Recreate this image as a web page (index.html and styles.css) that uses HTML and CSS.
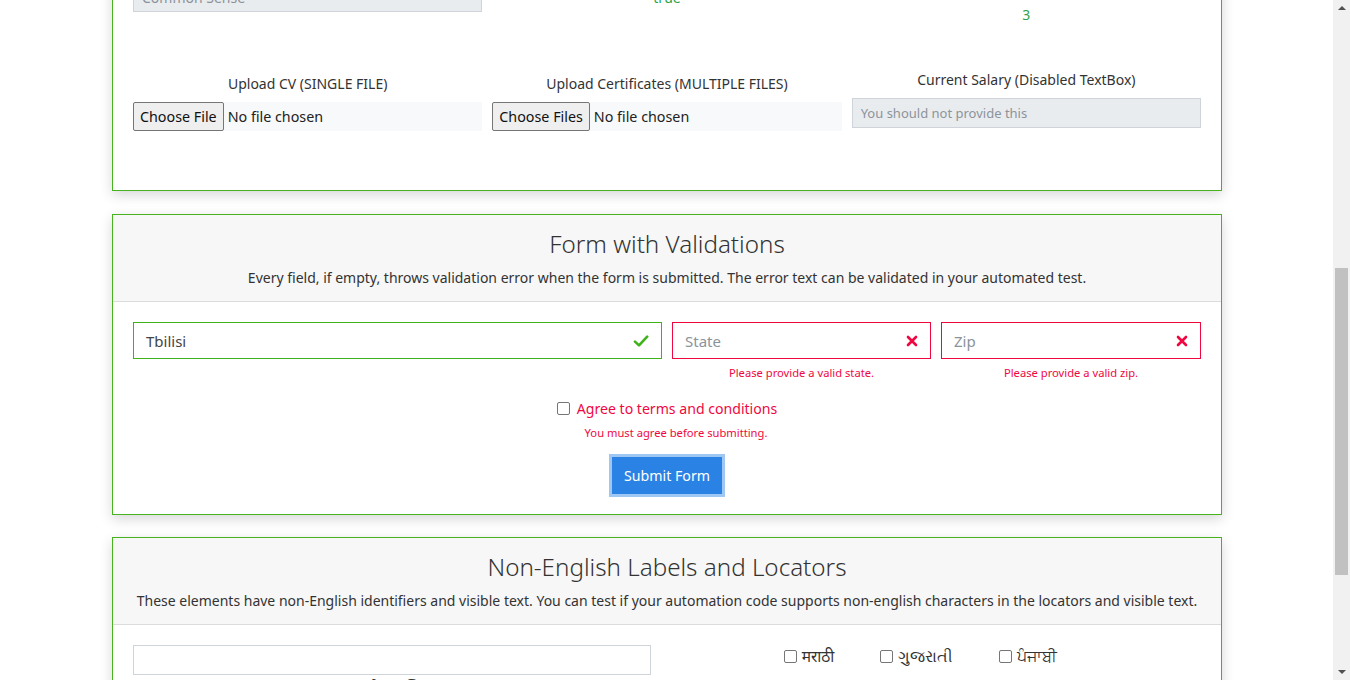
FILE: index.html
```html
<!DOCTYPE html>
<html lang="en">
<head>
<meta charset="utf-8">
<title>Forms</title>
<link rel="stylesheet" href="styles.css">
</head>
<body>
<div class="viewport">
  <main class="page">
    <div class="container">
      <section class="card card-top">
        <div class="card-body">
          <div class="grid3 row-top">
            <div class="col"><input class="form-control disabled" value="Common Sense" disabled></div>
            <div class="col value v-true">true</div>
            <div class="col value v-three">3</div>
          </div>
          <div class="grid3 row-upload">
            <div class="col col-file">
              <div class="lbl">Upload CV (SINGLE FILE)</div>
              <div class="file"><span class="file-btn">Choose File</span><span class="file-txt">No file chosen</span></div>
            </div>
            <div class="col col-file">
              <div class="lbl">Upload Certificates (MULTIPLE FILES)</div>
              <div class="file"><span class="file-btn">Choose Files</span><span class="file-txt">No file chosen</span></div>
            </div>
            <div class="col">
              <div class="lbl">Current Salary (Disabled TextBox)</div>
              <input class="form-control disabled small" placeholder="You should not provide this" disabled>
            </div>
          </div>
        </div>
      </section>

      <section class="card">
        <header class="card-header">
          <h2 class="card-title">Form with Validations</h2>
          <p class="card-sub">Every field, if empty, throws validation error when the form is submitted. The error text can be validated in your automated test.</p>
        </header>
        <div class="card-body">
          <div class="vrow">
            <div class="vcol">
              <div class="vinput valid">
                <span class="vtext">Tbilisi</span>
                <svg class="vicon" viewBox="0 0 16 16" width="16" height="16"><path d="M2 8.6 L6 12.4 L14.2 3.6" fill="none" stroke="#3fb31c" stroke-width="2.6" stroke-linecap="round" stroke-linejoin="round"/></svg>
              </div>
            </div>
            <div class="vcol">
              <div class="vinput invalid">
                <span class="vtext ph">State</span>
                <svg class="vicon" viewBox="0 0 12 12" width="12" height="12"><path d="M2 2 L10 10 M10 2 L2 10" fill="none" stroke="#f0073f" stroke-width="2.6" stroke-linecap="round"/></svg>
              </div>
              <div class="err">Please provide a valid state.</div>
            </div>
            <div class="vcol">
              <div class="vinput invalid">
                <span class="vtext ph">Zip</span>
                <svg class="vicon" viewBox="0 0 12 12" width="12" height="12"><path d="M2 2 L10 10 M10 2 L2 10" fill="none" stroke="#f0073f" stroke-width="2.6" stroke-linecap="round"/></svg>
              </div>
              <div class="err">Please provide a valid zip.</div>
            </div>
          </div>
          <div class="agree">
            <span class="cbox"></span>
            <span class="agree-txt">Agree to terms and conditions</span>
          </div>
          <div class="err err-agree">You must agree before submitting.</div>
          <div class="submit-wrap"><button class="btn" type="button">Submit Form</button></div>
        </div>
      </section>

      <section class="card">
        <header class="card-header">
          <h2 class="card-title">Non-English Labels and Locators</h2>
          <p class="card-sub">These elements have non-English identifiers and visible text. You can test if your automation code supports non-english characters in the locators and visible text.</p>
        </header>
        <div class="card-body ne-body">
          <div class="ne-col">
            <input class="form-control ne-input">
            <div class="ne-label">तुमचे नाव लिहा</div>
          </div>
          <div class="ne-checks">
            <span class="ne-check"><span class="cbox"></span>मराठी</span>
            <span class="ne-check"><span class="cbox"></span>ગુજરાતી</span>
            <span class="ne-check"><span class="cbox"></span>ਪੰਜਾਬੀ</span>
          </div>
        </div>
      </section>
    </div>
  </main>
  <div class="scrollbar">
    <span class="arrow up"></span>
    <div class="track"><div class="thumb"></div></div>
    <span class="arrow down"></span>
  </div>
</div>
</body>
</html>
```

FILE: styles.css
```css
* { box-sizing: border-box; }
html, body { margin: 0; padding: 0; }
body {
  font-family: "Noto Sans", "Open Sans", sans-serif;
  color: #333;
  background: #fff;
}
.viewport {
  display: flex;
  width: 1350px;
  height: 680px;
  overflow: hidden;
}
.page {
  flex: 0 0 1333px;
  height: 680px;
  overflow: hidden;
}
.container {
  width: 1110px;
  margin-left: 112px;
}
.card {
  border: 1px solid #46b31f;
  background: #fff;
  box-shadow: 0 4px 12px rgba(0, 0, 0, 0.16);
  margin-bottom: 22px;
}
.card-top {
  margin-top: -39px;
  margin-bottom: 23px;
}
.card-body {
  padding: 20px;
}
.grid3 {
  display: grid;
  grid-template-columns: 1fr 1fr 1fr;
  column-gap: 10px;
  align-items: start;
}
.form-control {
  display: block;
  width: 100%;
  height: 30px;
  border: 1px solid #ced4da;
  background: #fff;
  font-family: inherit;
  font-size: 14px;
  color: #495057;
  padding: 0 8px;
  outline: none;
}
.form-control.disabled {
  background: #e9ecef;
  color: #8c939a;
}
.form-control.small { font-size: 13px; }
.form-control::placeholder { color: #8c939a; }
.value {
  text-align: center;
  color: #2ea44f;
  font-size: 14px;
  line-height: 20px;
}
.v-true { margin-top: 6px; }
.v-three { margin-top: 23px; }
.row-upload {
  margin-top: 44px;
  margin-bottom: 39px;
}
.lbl {
  text-align: center;
  font-size: 14px;
  line-height: 22px;
  margin-bottom: 7px;
  color: #333;
}
.col-file { padding-top: 4px; }
.file {
  display: flex;
  align-items: stretch;
  height: 29px;
  background: #f8f9fa;
  font-size: 14.3px;
  color: #222;
}
.file-btn {
  display: flex;
  align-items: center;
  padding: 0 6px;
  border: 1px solid #767676;
  border-radius: 2px;
  background: #efefef;
  color: #111;
}
.file-txt {
  display: flex;
  align-items: center;
  padding-left: 4px;
}
.card-header {
  background: #f7f7f7;
  border-bottom: 1px solid #dcdcdc;
  padding: 13px 20px 13px;
  text-align: center;
}
.card-title {
  margin: 0 0 8px;
  font-size: 24.2px;
  line-height: 31px;
  font-weight: 300;
  color: #333;
}
.card-sub {
  margin: 0;
  font-size: 14px;
  line-height: 21px;
  color: #333;
}
.vrow {
  display: grid;
  grid-template-columns: 529px 259px 1fr;
  column-gap: 10px;
  align-items: start;
}
.vinput {
  display: flex;
  align-items: center;
  justify-content: space-between;
  height: 37px;
  border: 1px solid #ced4da;
  padding: 0 12px 0 12px;
  font-size: 15px;
}
.vinput.valid { border-color: #3fb31c; }
.vinput.invalid { border-color: #f0073f; }
.vtext { color: #444; }
.vtext.ph { color: #8c939a; }
.err {
  margin-top: 6px;
  text-align: center;
  font-size: 11.2px;
  line-height: 16px;
  color: #f0073f;
}
.err-agree { padding-left: 18px; }
.agree {
  display: flex;
  justify-content: center;
  align-items: center;
  gap: 7px;
  margin-top: 16px;
  height: 22px;
  font-size: 14.1px;
  color: #f0073f;
}
.cbox {
  display: inline-block;
  flex: 0 0 13px;
  width: 13px;
  height: 13px;
  border: 1px solid #767676;
  border-radius: 2px;
  background: #fff;
}
.submit-wrap {
  display: flex;
  justify-content: center;
  margin-top: 16px;
}
.btn {
  height: 37px;
  padding: 0 12px;
  border: none;
  background: #2a82e4;
  color: #fff;
  font-family: inherit;
  font-size: 14.2px;
  box-shadow: 0 0 0 3px #9ec7f3;
}
.ne-body {
  display: grid;
  grid-template-columns: 518px 1fr;
  column-gap: 10px;
  align-items: start;
}
.ne-input { height: 30px; }
.ne-label {
  text-align: center;
  font-size: 15px;
  line-height: 22px;
}
.ne-checks {
  display: flex;
  justify-content: center;
  align-items: flex-start;
  gap: 46px;
  padding-right: 21px;
  font-size: 15.5px;
  line-height: 22px;
  height: 22px;
}
.ne-check {
  display: flex;
  align-items: center;
  gap: 5px;
  height: 22px;
}
.scrollbar {
  flex: 0 0 17px;
  height: 680px;
  background: #f1f1f1;
  display: flex;
  flex-direction: column;
  align-items: center;
}
.arrow {
  width: 0;
  height: 0;
  border-left: 4px solid transparent;
  border-right: 4px solid transparent;
}
.arrow.up {
  margin-top: 6px;
  border-bottom: 4px solid #505050;
}
.arrow.down {
  margin-bottom: 6px;
  border-top: 4px solid #505050;
}
.track {
  flex: 1;
  width: 100%;
  padding: 0 2px;
}
.thumb {
  margin-top: 258px;
  height: 307px;
  background: #c1c1c1;
}
```
